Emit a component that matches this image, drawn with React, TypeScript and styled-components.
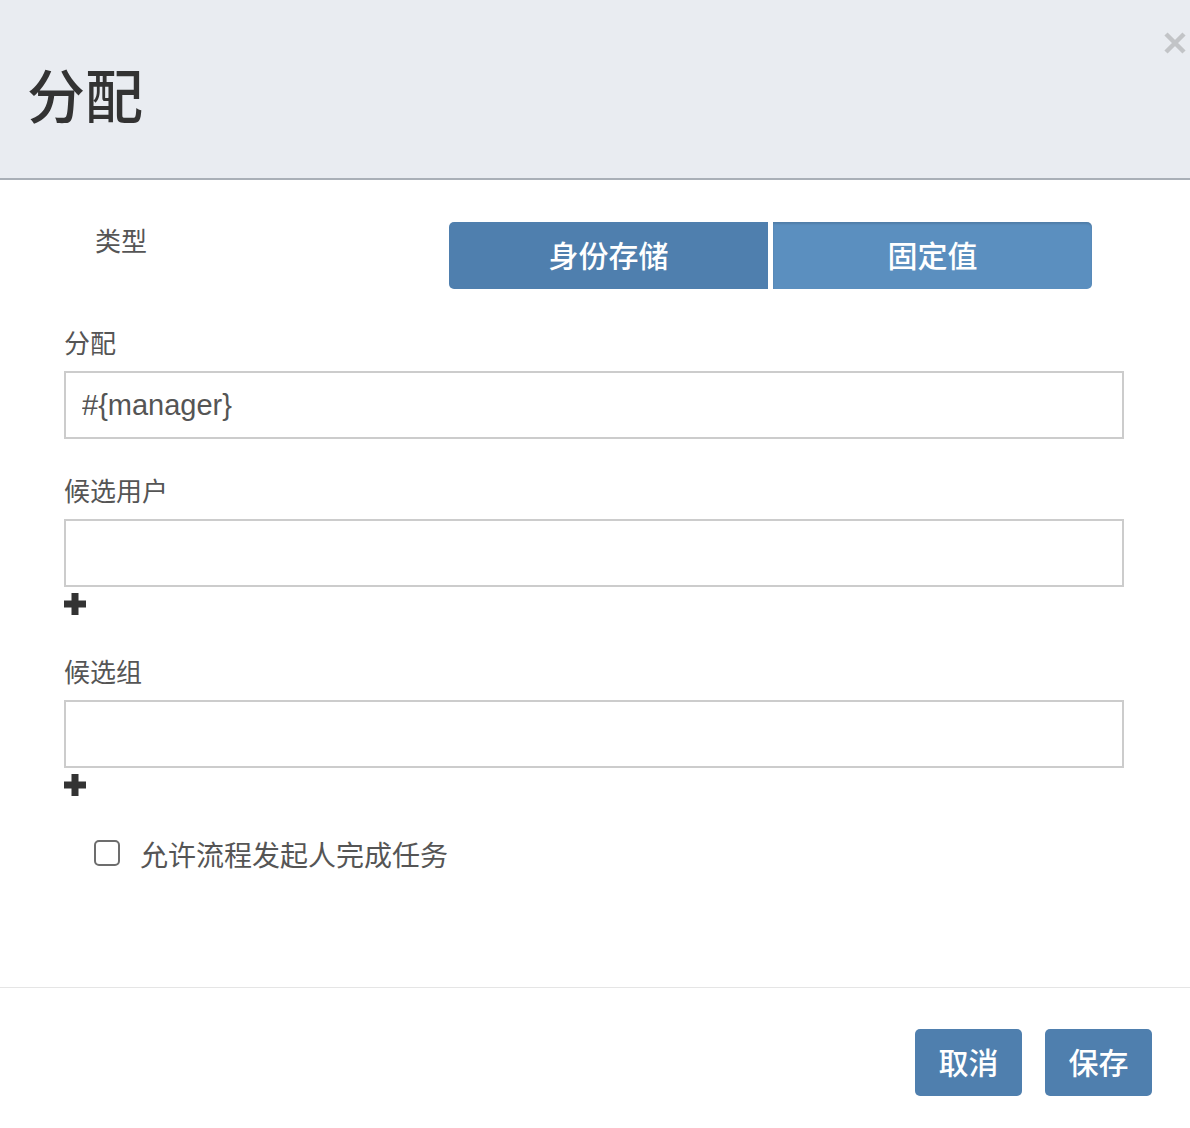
import React from "react";
import styled, { createGlobalStyle } from "styled-components";

const Global = createGlobalStyle`
  html, body { margin: 0; padding: 0; background: #fff; }
  body { font-family: "Helvetica Neue", "Liberation Sans", "Noto Sans CJK SC", sans-serif; }
  * { box-sizing: border-box; }
`;

const Modal = styled.div`
  width: 1190px;
  height: 1128px;
  display: flex;
  flex-direction: column;
  background: #fff;
`;

const Header = styled.div`
  position: relative;
  height: 180px;
  background: #e9ecf1;
  border-bottom: 2px solid #a9afb7;
  display: flex;
  align-items: center;
  padding: 8px 0 0 27px;
`;

const Title = styled.h1`
  margin: 0;
  font-size: 58px;
  line-height: 1;
  font-weight: 500;
  color: #333;
  font-family: "Noto Sans CJK SC", sans-serif;
`;

const Close = styled.button`
  position: absolute;
  top: 30px;
  right: 2px;
  width: 26px;
  height: 26px;
  padding: 0;
  border: 0;
  background: transparent;
  display: flex;
  align-items: center;
  justify-content: center;
`;

const Body = styled.div`
  height: 808px;
  padding: 42px 66px 0 64px;
  border-bottom: 1px solid #e5e5e5;
`;

const TypeRow = styled.div`
  display: flex;
  align-items: flex-start;
`;

const TypeLabel = styled.div`
  width: 385px;
  padding: 2px 0 0 31px;
  font-size: 26px;
  line-height: 32px;
  color: #555;
  font-family: "Noto Sans CJK SC", sans-serif;
`;

const Toggle = styled.div`
  display: flex;
  gap: 5px;
`;

const ToggleButton = styled.button<{ $active?: boolean; $pos: "left" | "right" }>`
  width: 319px;
  height: 67px;
  border: 0;
  border-radius: ${(p) => (p.$pos === "left" ? "5px 0 0 5px" : "0 5px 5px 0")};
  background: ${(p) => (p.$active ? "#4f7fae" : "#5b8fbf")};
  box-shadow: ${(p) => (p.$active ? "none" : "inset 0 2px 2px rgba(0,0,0,0.12)")};
  color: #fff;
  font-size: 30px;
  font-weight: 500;
  font-family: "Noto Sans CJK SC", sans-serif;
  padding: 0 0 4px;
`;

const Group = styled.div<{ $top: number }>`
  margin-top: ${(p) => p.$top}px;
`;

const Label = styled.label`
  display: block;
  font-size: 26px;
  line-height: 36px;
  color: #555;
  margin-bottom: 11px;
  font-family: "Noto Sans CJK SC", sans-serif;
`;

const Input = styled.input`
  display: block;
  width: 100%;
  height: 68px;
  border: 2px solid #cccccc;
  border-radius: 0;
  padding: 0 16px;
  font-size: 29px;
  color: #555;
  font-family: "Helvetica Neue", "Liberation Sans", sans-serif;
  outline: none;
`;

const AddButton = styled.button`
  display: block;
  margin-top: 6px;
  width: 22px;
  height: 22px;
  padding: 0;
  border: 0;
  background: transparent;
`;

const CheckRow = styled.label`
  display: flex;
  align-items: center;
  gap: 20px;
  margin: 40px 0 0 30px;
  font-size: 28px;
  line-height: 36px;
  color: #555;
  font-family: "Noto Sans CJK SC", sans-serif;
`;

const Box = styled.span`
  width: 26px;
  height: 26px;
  border: 2px solid #6d6d6d;
  border-radius: 5px;
  background: #fff;
  margin-top: -2px;
`;

const Footer = styled.div`
  display: flex;
  justify-content: flex-end;
  gap: 23px;
  padding: 41px 38px 0 0;
`;

const FooterButton = styled.button`
  width: 107px;
  height: 67px;
  border: 0;
  border-radius: 5px;
  background: #4f7fae;
  color: #fff;
  font-size: 30px;
  font-weight: 500;
  font-family: "Noto Sans CJK SC", sans-serif;
  padding: 0 0 4px;
`;

const Plus = () => (
  <svg width="22" height="22" viewBox="0 0 22 22">
    <path d="M7.5 0h7v7.5H22v7h-7.5V22h-7v-7.5H0v-7h7.5z" fill="#333" />
  </svg>
);

const XIcon = () => (
  <svg width="24" height="24" viewBox="0 0 24 24">
    <path d="M3 3L21 21M21 3L3 21" stroke="#c2c4c7" strokeWidth="4.5" strokeLinecap="butt" />
  </svg>
);

export default function App() {
  return (
    <>
      <Global />
      <Modal>
        <Header>
          <Title>分配</Title>
          <Close aria-label="close">
            <XIcon />
          </Close>
        </Header>
        <Body>
          <TypeRow>
            <TypeLabel>类型</TypeLabel>
            <Toggle>
              <ToggleButton $active $pos="left">身份存储</ToggleButton>
              <ToggleButton $pos="right">固定值</ToggleButton>
            </Toggle>
          </TypeRow>
          <Group $top={35}>
            <Label>分配</Label>
            <Input defaultValue="#{manager}" />
          </Group>
          <Group $top={33}>
            <Label>候选用户</Label>
            <Input />
            <AddButton aria-label="add">
              <Plus />
            </AddButton>
          </Group>
          <Group $top={38}>
            <Label>候选组</Label>
            <Input />
            <AddButton aria-label="add">
              <Plus />
            </AddButton>
          </Group>
          <CheckRow>
            <Box />
            允许流程发起人完成任务
          </CheckRow>
        </Body>
        <Footer>
          <FooterButton>取消</FooterButton>
          <FooterButton>保存</FooterButton>
        </Footer>
      </Modal>
    </>
  );
}
